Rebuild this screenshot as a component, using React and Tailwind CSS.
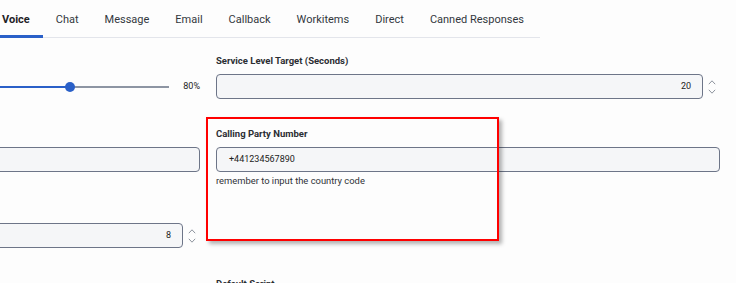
import React from "react";

const tabs = ["Voice", "Chat", "Message", "Email", "Callback", "Workitems", "Direct", "Canned Responses"];

function Chevron({ down }) {
  return (
    <svg width="8" height="5" viewBox="0 0 8 5" fill="none">
      <path
        d={down ? "M0.8 0.8 L4 4.2 L7.2 0.8" : "M0.8 4.2 L4 0.8 L7.2 4.2"}
        stroke="#8d939d"
        strokeWidth="1"
      />
    </svg>
  );
}

function NumberInput({ value }) {
  return (
    <div className="flex h-[25px]">
      <div className="flex-1 rounded-[4px] border border-[#6d7588] bg-[#f5f6f8] flex items-center justify-end pr-[11px] text-[9px] text-[#222]">
        {value}
      </div>
      <div className="w-[17px] flex flex-col items-center justify-center gap-[4px]">
        <Chevron />
        <Chevron down />
      </div>
    </div>
  );
}

function Label({ children }) {
  return <div className="h-[12px] text-[9.5px] leading-[12px] font-bold text-[#2b2e33] mb-[7px] whitespace-nowrap">{children}</div>;
}

function Spacer() {
  return <div className="h-[12px] mb-[7px]" />;
}

export default function App() {
  return (
    <div
      className="w-[736px] h-[283px] overflow-hidden bg-[#fdfdfd] text-[#222]"
      style={{ fontFamily: "Roboto, 'Noto Sans', sans-serif" }}
    >
      <div className="-ml-[11px] w-[551px] h-[38px] border-b border-[#e3e5eb] flex">
        {tabs.map((t, i) => (
          <div
            key={t}
            className={
              i === 0
                ? "px-[13px] pt-[12px] text-[11px] leading-[16px] font-bold text-[#1f2226] border-b-[3px] border-[#2a60c8] -mb-px"
                : "px-[13px] pt-[12px] text-[11px] leading-[16px] text-[#33383e] whitespace-nowrap"
            }
          >
            {t}
          </div>
        ))}
      </div>

      <div className="-ml-[304px] flex flex-col">
        <div className="mt-[17px] grid grid-cols-[504px_504px] gap-x-4">
          <div>
            <Spacer />
            <div className="h-[25px] flex items-center">
              <div className="relative flex-1 h-[10px] flex items-center">
                <div className="h-[2px] w-[374px] bg-[#2a60c8]" />
                <div className="h-[2px] flex-1 bg-[#8d95a3]" />
                <div className="absolute left-[369px] top-0 w-[10px] h-[10px] rounded-full bg-[#2a60c8]" />
              </div>
              <div className="w-[31px] text-right text-[9px] text-[#222]">80%</div>
            </div>
          </div>
          <div>
            <Label>Service Level Target (Seconds)</Label>
            <NumberInput value="20" />
          </div>
        </div>

        <div className="mt-[29px] grid grid-cols-[504px_504px] gap-x-4">
          <div>
            <Spacer />
            <div className="h-[25px] rounded-[4px] border border-[#6d7588] bg-[#f5f6f8]" />
          </div>
          <div className="relative">
            <Label>Calling Party Number</Label>
            <div className="h-[25px] rounded-[4px] border border-[#6d7588] bg-[#f5f6f8] flex items-center pl-[12px] text-[9px] text-[#222]">
              +441234567890
            </div>
            <div className="mt-[3px] text-[9.4px] leading-[12px] text-[#2f3237]">remember to input the country code</div>
            <div className="absolute -left-[10px] -top-[11px] w-[293px] h-[124px] border-[2.5px] border-[#ff0000] shadow-[3px_3px_4px_rgba(0,0,0,0.3)]" />
          </div>
        </div>

        <div className="mt-[17px] grid grid-cols-[504px_504px] gap-x-4">
          <div>
            <Spacer />
            <NumberInput value="8" />
          </div>
          <div />
        </div>

        <div className="mt-[30px] grid grid-cols-[504px_504px] gap-x-4">
          <div />
          <div>
            <Label>Default Script</Label>
          </div>
        </div>
      </div>
    </div>
  );
}
